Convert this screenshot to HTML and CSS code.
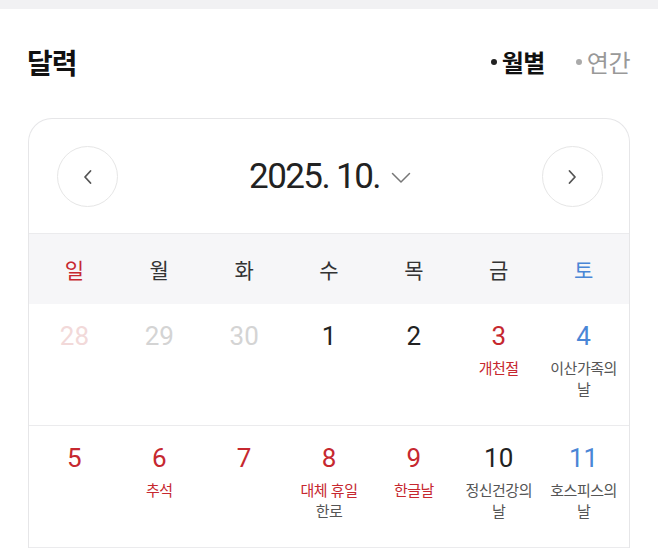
FILE: index.html
```html
<!DOCTYPE html>
<html lang="ko">
<head>
<meta charset="utf-8">
<link rel="stylesheet" href="styles.css">
</head>
<body>
<div class="topbar"></div>
<header class="head">
  <h1 class="title">달력</h1>
  <div class="tabs">
    <span class="tab active"><i class="dot"></i>월별</span>
    <span class="tab"><i class="dot"></i>연간</span>
  </div>
</header>
<section class="card">
  <div class="nav">
    <button class="circle" aria-label="이전 달">
      <svg width="14" height="16" viewBox="0 0 14 16"><path d="M9.5 2 L4 8 L9.5 14" fill="none" stroke="#555" stroke-width="1.8" stroke-linecap="round" stroke-linejoin="round"/></svg>
    </button>
    <div class="month">
      <span class="month-text">2025. 10.</span>
      <svg class="caret" width="20" height="12" viewBox="0 0 20 12"><path d="M1.5 1.5 L10 10 L18.5 1.5" fill="none" stroke="#777" stroke-width="1.5" stroke-linecap="round" stroke-linejoin="round"/></svg>
    </div>
    <button class="circle" aria-label="다음 달">
      <svg width="14" height="16" viewBox="0 0 14 16"><path d="M4.5 2 L10 8 L4.5 14" fill="none" stroke="#555" stroke-width="1.8" stroke-linecap="round" stroke-linejoin="round"/></svg>
    </button>
  </div>
  <div class="weekdays">
    <div class="wd sun">일</div>
    <div class="wd">월</div>
    <div class="wd">화</div>
    <div class="wd">수</div>
    <div class="wd">목</div>
    <div class="wd">금</div>
    <div class="wd sat">토</div>
  </div>
  <div class="week">
    <div class="day"><span class="num prev-sun">28</span></div>
    <div class="day"><span class="num prev">29</span></div>
    <div class="day"><span class="num prev">30</span></div>
    <div class="day"><span class="num">1</span></div>
    <div class="day"><span class="num">2</span></div>
    <div class="day"><span class="num red">3</span><span class="lbl red">개천절</span></div>
    <div class="day"><span class="num blue">4</span><span class="lbl">이산가족의<br>날</span></div>
  </div>
  <div class="week">
    <div class="day"><span class="num red">5</span></div>
    <div class="day"><span class="num red">6</span><span class="lbl red">추석</span></div>
    <div class="day"><span class="num red">7</span></div>
    <div class="day"><span class="num red">8</span><span class="lbl red">대체 휴일</span><span class="lbl">한로</span></div>
    <div class="day"><span class="num red">9</span><span class="lbl red">한글날</span></div>
    <div class="day"><span class="num">10</span><span class="lbl">정신건강의<br>날</span></div>
    <div class="day"><span class="num blue">11</span><span class="lbl">호스피스의<br>날</span></div>
  </div>
</section>
</body>
</html>
```

FILE: styles.css
```css
* { box-sizing: border-box; }
html, body { margin: 0; padding: 0; background: #fff; }
body {
  font-family: Roboto, "Noto Sans CJK KR", sans-serif;
  color: #222;
  width: 658px;
  height: 548px;
  overflow: hidden;
}
.topbar { height: 9px; background: #f1f1f3; }

.head {
  display: flex;
  justify-content: space-between;
  align-items: flex-start;
  padding: 34px 28px 0 27px;
  height: 109px;
}
.title {
  margin: 0;
  font-family: "Noto Sans CJK KR", sans-serif;
  font-size: 28px;
  font-weight: 700;
  line-height: 38px;
  letter-spacing: -1px;
  color: #111;
}
.tabs { display: flex; gap: 31px; padding-top: 4px; }
.tab {
  display: flex;
  align-items: center;
  font-family: "Noto Sans CJK KR", sans-serif;
  font-size: 24px;
  line-height: 30px;
  letter-spacing: -0.5px;
  color: #999;
}
.tab.active { color: #111; font-weight: 700; letter-spacing: -0.5px; }
.dot {
  width: 6px; height: 6px; border-radius: 50%;
  background: #aaa; margin-right: 5px; display: inline-block;
}
.tab.active .dot { background: #222; }

.card {
  margin: 0 28px;
  border: 1px solid #e6e6e8;
  border-bottom: none;
  border-radius: 24px 24px 0 0;
  height: 440px;
}
.nav {
  display: flex;
  align-items: center;
  justify-content: space-between;
  padding: 27px 26px 26px 28px;
}
.circle {
  width: 61px; height: 61px;
  border-radius: 50%;
  border: 1px solid #e6e6e6;
  background: #fff;
  display: flex; align-items: center; justify-content: center;
  padding: 0;
}
.month { display: flex; align-items: center; gap: 11px; }
.month-text {
  font-size: 35px;
  letter-spacing: -1.6px;
  color: #222;
  line-height: 40px;
}
.caret { margin-top: 2px; }

.weekdays {
  display: grid;
  grid-template-columns: repeat(7, 1fr);
  padding: 0 3px;
  background: #f6f6f8;
  border-top: 1px solid #ebebed;
  height: 71px;
  align-items: center;
}
.wd {
  text-align: center;
  font-family: "Noto Sans CJK KR", sans-serif;
  font-size: 21px;
  color: #333;
  line-height: 28px;
}
.wd.sun { color: #c6282f; }
.wd.sat { color: #4a86d6; }

.week {
  display: grid;
  grid-template-columns: repeat(7, 1fr);
  padding: 17px 3px 0;
  height: 122px;
  border-bottom: 1px solid #ebebed;
}
.day {
  display: flex;
  flex-direction: column;
  align-items: center;
  text-align: center;
}
.num {
  font-size: 26px;
  line-height: 30px;
  color: #222;
  margin-bottom: 6px;
}
.num.prev { color: #d4d4d4; }
.num.prev-sun { color: #f2d9d9; }
.red { color: #c6282f !important; }
.blue { color: #4a86d6 !important; }
.lbl {
  font-family: "Noto Sans CJK KR", sans-serif;
  font-size: 15px;
  line-height: 21px;
  letter-spacing: -0.5px;
  color: #555;
  white-space: nowrap;
}
```
